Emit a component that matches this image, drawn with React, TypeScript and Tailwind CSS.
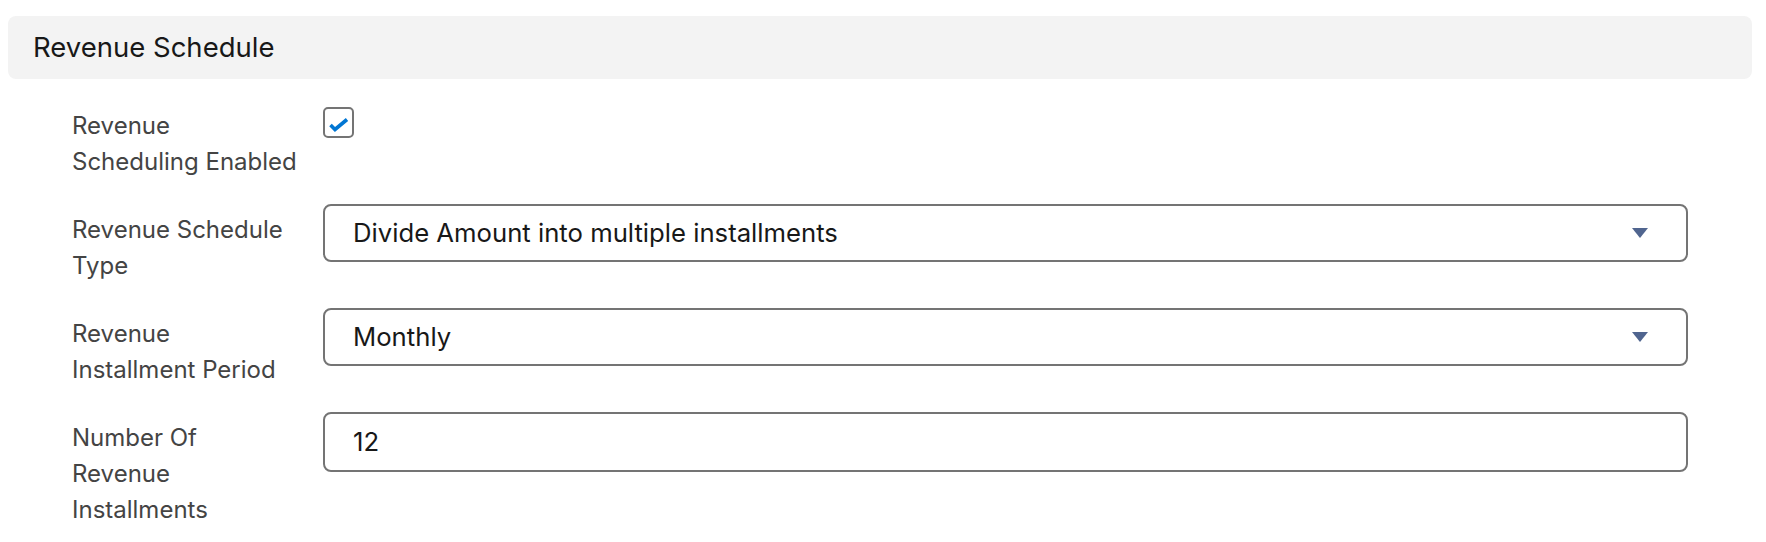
import { ReactNode } from 'react'

function Label({ children }: { children: ReactNode }) {
  return <div className="pt-2 text-[24px] leading-9 text-[#444444] whitespace-nowrap">{children}</div>
}

function Select({ value }: { value: string }) {
  return (
    <div className="h-[58px] flex items-center justify-between rounded-lg border-2 border-[#747474] bg-white pl-[28px] pr-[38px]">
      <span className="text-[25.7px] text-[#181818]">{value}</span>
      <svg width="16" height="10" viewBox="0 0 16 10">
        <path d="M0 0 H16 L8 10 Z" fill="#50658f" />
      </svg>
    </div>
  )
}

export default function App() {
  return (
    <div className="min-h-screen bg-white pt-4 font-['Inter','Liberation_Sans',sans-serif]">
      <div className="ml-2 mr-[14px] h-[63px] rounded-lg bg-[#f3f3f3] flex items-center pl-[25px]">
        <h2 className="text-[27.5px] text-[#181818]">Revenue Schedule</h2>
      </div>

      <div className="mt-[21px] pl-[72px] pr-[78px] flex flex-col gap-6">
        <div className="grid grid-cols-[251px_1fr] items-start">
          <Label>
            Revenue
            <br />
            Scheduling Enabled
          </Label>
          <div className="mt-[7px] w-[31px] h-[31px] rounded-[5px] border-2 border-[#747474] bg-white flex items-center justify-center">
            <svg width="27" height="27" viewBox="0 0 27 27">
              <path d="M5.5 16 L10 20.5 L22 10.5" fill="none" stroke="#0176d3" strokeWidth="3.6" />
            </svg>
          </div>
        </div>

        <div className="grid grid-cols-[251px_1fr] items-start">
          <Label>
            Revenue Schedule
            <br />
            Type
          </Label>
          <Select value="Divide Amount into multiple installments" />
        </div>

        <div className="grid grid-cols-[251px_1fr] items-start">
          <Label>
            Revenue
            <br />
            Installment Period
          </Label>
          <Select value="Monthly" />
        </div>

        <div className="grid grid-cols-[251px_1fr] items-start">
          <Label>
            Number Of
            <br />
            Revenue
            <br />
            Installments
          </Label>
          <div className="h-[60px] flex items-center rounded-lg border-2 border-[#747474] bg-white pl-[28px]">
            <span className="text-[25.7px] text-[#181818]">12</span>
          </div>
        </div>
      </div>
    </div>
  )
}
